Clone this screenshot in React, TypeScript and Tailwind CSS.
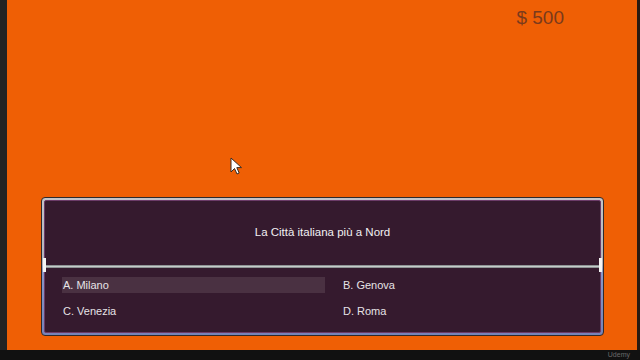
import React from "react";

const font = { fontFamily: '"Liberation Sans", Arial, sans-serif' };

export default function App() {
  const answers = ["A. Milano", "B. Genova", "C. Venezia", "D. Roma"];
  return (
    <div className="w-[640px] h-[360px] bg-[#111111] flex flex-col overflow-hidden" style={font}>
      <div className="flex h-[350px] shrink-0">
        <div className="w-[7px] shrink-0 bg-[#232323]" />
        <div className="relative flex-1 min-w-0 bg-[#ef5f05] flex flex-col">
          <div className="flex justify-end pr-[73px] pt-[6px]">
            <span className="text-[19px] leading-[24px] text-[#7a3a1c]">$ 500</span>
          </div>
          {/* cursor */}
          <svg className="absolute left-[223px] top-[157px]" width="14" height="19" viewBox="0 0 14 19">
            <path d="M1 1 L1 15 L4.5 11.5 L7 17 L9.2 16 L6.8 10.6 L11.5 10.6 Z" fill="#ffffff" stroke="#3a2a20" strokeWidth="1" strokeLinejoin="round" />
          </svg>
          <div className="relative mt-auto ml-[34px] mr-[33px] mb-[14px] h-[139px] rounded-[4px] border border-[#2e2a2c] p-[2px] bg-[linear-gradient(to_bottom,#c3c3c8_0%,#b4b4bc_48%,#8897c8_55%,#7683b8_100%)]">
            <div className="h-full flex flex-col bg-[#351a2e] border border-[#6b3b68] rounded-[2px]">
              <div className="h-[64px] flex items-center justify-center">
                <span className="text-[11.5px] text-[#f2f0f2]">La Città italiana più a Nord</span>
              </div>
              <div className="h-[3px] bg-[#c6cccc] border-y border-[#8e9494]" />
              <div className="grid grid-cols-[263px_1fr] gap-x-[17px] gap-y-[10px] pl-[17px] pt-[9px]">
                {answers.map((a, i) => (
                  <div
                    key={a}
                    className={`h-[16px] flex items-center pl-[1px] text-[11px] text-[#e6e3e6] ${i === 0 ? "bg-[#4a3142]" : ""}`}
                  >
                    {a}
                  </div>
                ))}
              </div>
            </div>
            <div className="absolute left-[1px] top-[60px] w-[3px] h-[14px] bg-[#f4f4f4]" />
            <div className="absolute right-[1px] top-[60px] w-[3px] h-[14px] bg-[#f4f4f4]" />
          </div>
        </div>
        <div className="w-[3px] shrink-0 bg-[#2a1a12]" />
      </div>
      <div className="flex-1 flex justify-end items-center pr-[10px]">
        <span className="text-[7px] leading-[8px] text-[#6a6a6a]">Udemy</span>
      </div>
    </div>
  );
}
